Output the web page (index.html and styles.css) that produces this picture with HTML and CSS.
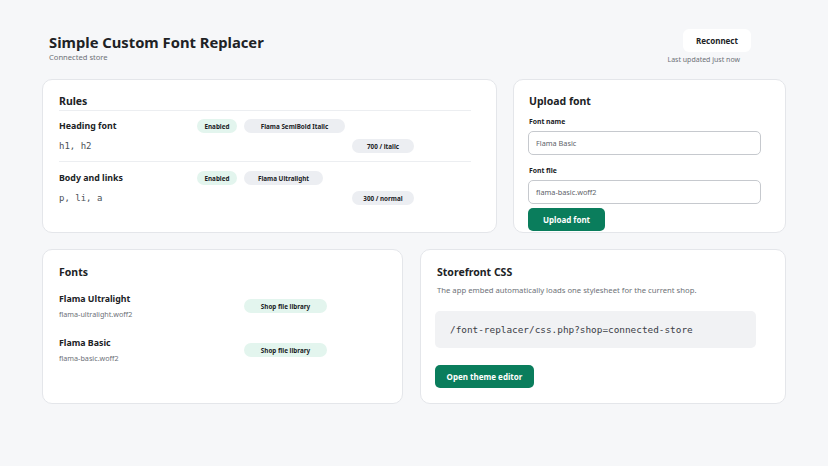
FILE: index.html
```html
<!DOCTYPE html>
<html lang="en">
<head>
    <meta charset="UTF-8">
    <meta name="viewport" content="width=device-width, initial-scale=1.0">
    <title>Simple Custom Font Replacer</title>
    <link rel="stylesheet" href="styles.css">
</head>
<body>
    <div class="page">
        <header class="top">
            <div class="title-block">
                <h1>Simple Custom Font Replacer</h1>
                <p class="subtitle">Connected store</p>
            </div>
            <div class="sync">
                <button class="btn-light">Reconnect</button>
                <span class="sync-note">Last updated just now</span>
            </div>
        </header>

        <div class="row row-top">
            <section class="card">
                <h2 class="card-title with-rule">Rules</h2>
                <div class="rule">
                    <span class="rule-name">Heading font</span>
                    <div class="badges">
                        <span class="badge badge-green status">Enabled</span>
                        <span class="badge badge-grey font-a">Flama SemiBold Italic</span>
                    </div>
                    <span></span>
                    <code class="selector">h1, h2</code>
                    <span></span>
                    <span class="badge badge-grey weight">700 / italic</span>
                </div>
                <div class="rule">
                    <span class="rule-name">Body and links</span>
                    <div class="badges">
                        <span class="badge badge-green status">Enabled</span>
                        <span class="badge badge-grey font-b">Flama Ultralight</span>
                    </div>
                    <span></span>
                    <code class="selector">p, li, a</code>
                    <span></span>
                    <span class="badge badge-grey weight">300 / normal</span>
                </div>
            </section>

            <section class="card upload">
                <h2 class="card-title">Upload font</h2>
                <label class="field-label" for="font-name">Font name</label>
                <input class="field" id="font-name" type="text" placeholder="Flama Basic">
                <label class="field-label" for="font-file">Font file</label>
                <input class="field" id="font-file" type="text" placeholder="flama-basic.woff2">
                <button class="btn-green upload-btn">Upload font</button>
            </section>
        </div>

        <div class="row row-bottom">
            <section class="card">
                <h2 class="card-title">Fonts</h2>
                <div class="font-item">
                    <div>
                        <div class="font-name">Flama Ultralight</div>
                        <div class="font-file">flama-ultralight.woff2</div>
                    </div>
                    <span class="badge badge-green lib">Shop file library</span>
                </div>
                <div class="font-item">
                    <div>
                        <div class="font-name">Flama Basic</div>
                        <div class="font-file">flama-basic.woff2</div>
                    </div>
                    <span class="badge badge-green lib">Shop file library</span>
                </div>
            </section>

            <section class="card storefront">
                <h2 class="card-title">Storefront CSS</h2>
                <p class="card-text">The app embed automatically loads one stylesheet for the current shop.</p>
                <div class="code-box">/font-replacer/css.php?shop=connected-store</div>
                <button class="btn-green editor-btn">Open theme editor</button>
            </section>
        </div>
    </div>
</body>
</html>
```

FILE: styles.css
```css
* {
    margin: 0;
    padding: 0;
    box-sizing: border-box;
}

body {
    background: #f6f7f9;
    font-family: 'Noto Sans', 'Open Sans', sans-serif;
    color: #202225;
}

.page {
    width: 744px;
    margin: 0 auto;
    padding-top: 32px;
}

/* header */

.top {
    display: flex;
    justify-content: space-between;
    align-items: flex-start;
    height: 47px;
    padding-left: 7px;
}

h1 {
    font-size: 14.75px;
    font-weight: 700;
    line-height: 20px;
}

.subtitle {
    font-size: 7.6px;
    line-height: 10px;
    color: #6d7177;
}

.sync {
    display: flex;
    flex-direction: column;
    align-items: flex-end;
    margin-top: -3px;
    margin-right: 35px;
}

.btn-light {
    width: 68px;
    height: 23px;
    background: #ffffff;
    border: none;
    border-radius: 6px;
    font-family: inherit;
    font-size: 8px;
    font-weight: 700;
    color: #202225;
}

.sync-note {
    font-size: 7px;
    line-height: 10px;
    color: #6d7177;
    margin-top: 3px;
    margin-right: 11px;
}

/* grid rows */

.row {
    display: grid;
}

.row-top {
    grid-template-columns: 455px 273px;
    grid-template-rows: 154px;
    gap: 16px;
}

.row-bottom {
    grid-template-columns: 361px 366px;
    grid-template-rows: 155px;
    gap: 17px;
    margin-top: 16px;
}

.card {
    background: #ffffff;
    border: 1px solid #e4e6ea;
    border-radius: 10px;
    padding: 13px 16px 0;
}

.row-bottom .card {
    padding-top: 14px;
}

.card-title {
    font-size: 10.5px;
    font-weight: 700;
    line-height: 16px;
}

/* rules */

.with-rule {
    border-bottom: 1px solid #eceef1;
    padding-bottom: 1px;
    margin-right: 9px;
}

.rule {
    display: grid;
    grid-template-columns: 138px 155px 1fr;
    grid-template-rows: 14px 14px;
    row-gap: 6px;
    align-items: center;
    padding: 8px 0;
    margin-right: 9px;
}

.rule + .rule {
    border-top: 1px solid #eceef1;
    padding-top: 9px;
}

.rule-name {
    font-size: 8.8px;
    font-weight: 700;
}

.selector {
    font-family: 'DejaVu Sans Mono', monospace;
    font-size: 9px;
    color: #4b5057;
}

.badges {
    display: flex;
    gap: 7px;
}

.badge {
    display: inline-flex;
    align-items: center;
    justify-content: center;
    height: 14px;
    border-radius: 7px;
    font-size: 6.3px;
    font-weight: 700;
    color: #202225;
    white-space: nowrap;
}

.badge-green {
    background: #e3f5ee;
}

.badge-grey {
    background: #eceef2;
}

.status {
    width: 40px;
}

.font-a {
    width: 101px;
}

.font-b {
    width: 79px;
}

.weight {
    width: 62px;
}

/* upload form */

.upload {
    padding-left: 15px;
}

.field-label {
    display: block;
    font-size: 6.8px;
    font-weight: 700;
    line-height: 10px;
    margin-top: 8px;
}

.field {
    display: block;
    width: 233px;
    height: 24px;
    margin: 4px 0 0 -1px;
    padding: 0 7px;
    border: 1px solid #c6c9ce;
    border-radius: 5px;
    font-family: inherit;
    font-size: 7.3px;
}

.field::placeholder {
    color: #5e636a;
}

.field + .field-label {
    margin-top: 11px;
}

.btn-green {
    display: block;
    height: 23px;
    background: #0a7d5c;
    color: #ffffff;
    border: none;
    border-radius: 5px;
    font-family: inherit;
    font-size: 8px;
    font-weight: 700;
    margin-left: -1px;
}

.upload-btn {
    width: 77px;
    margin-top: 4px;
}

/* fonts list */

.font-item {
    display: grid;
    grid-template-columns: 185px auto;
    align-items: center;
    margin-top: 13px;
}

.font-item + .font-item {
    margin-top: 18px;
}

.font-name {
    font-size: 8.8px;
    font-weight: 700;
    line-height: 12px;
}

.font-file {
    font-size: 7.2px;
    line-height: 10px;
    color: #6d7177;
    margin-top: 4px;
}

.lib {
    justify-self: start;
    width: 83px;
}

/* storefront */

.storefront {
    padding-left: 16px;
}

.card-text {
    font-size: 7.7px;
    line-height: 10px;
    color: #6d7177;
    margin-top: 5px;
}

.code-box {
    display: flex;
    align-items: center;
    width: 321px;
    height: 37px;
    margin: 16px 0 0 -2px;
    padding: 0 15px;
    background: #f1f2f4;
    border-radius: 5px;
    font-family: 'DejaVu Sans Mono', monospace;
    font-size: 9.4px;
    color: #3b4047;
}

.editor-btn {
    width: 99px;
    margin: 17px 0 0 -2px;
}
```
